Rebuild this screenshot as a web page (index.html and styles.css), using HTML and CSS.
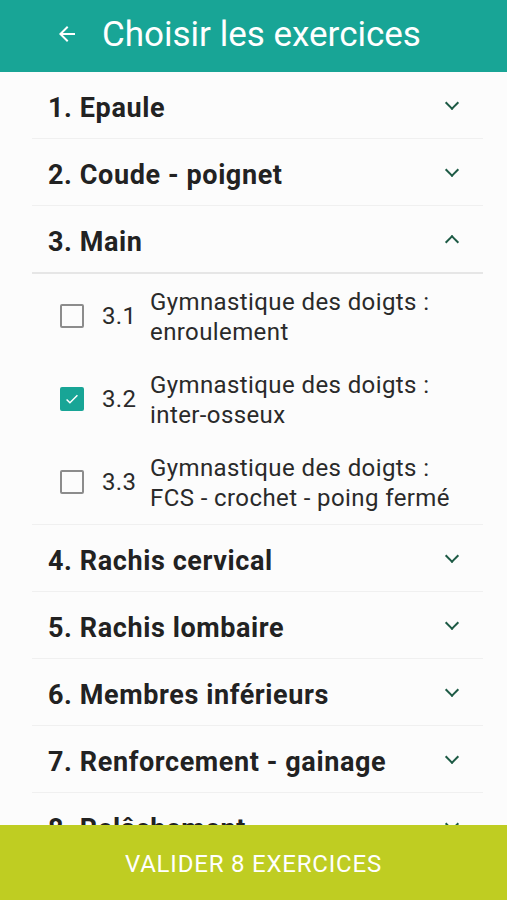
FILE: index.html
```html
<!DOCTYPE html>
<html lang="fr">
<head>
    <meta charset="UTF-8">
    <meta name="viewport" content="width=device-width, initial-scale=1.0">
    <title>Choisir les exercices</title>
    <link rel="stylesheet" href="styles.css">
</head>
<body>
    <div class="toolbar">
        <svg class="back" viewBox="0 0 24 24" width="24" height="24">
            <path d="M20 11H7.83l5.59-5.59L12 4l-8 8 8 8 1.41-1.41L7.83 13H20v-2z" fill="#fff"/>
        </svg>
        <h1>Choisir les exercices</h1>
    </div>

    <div class="list">
        <div class="section">
            <div class="section-head"><span>1. Epaule</span><span class="chevron down"></span></div>
        </div>
        <div class="section">
            <div class="section-head"><span>2. Coude - poignet</span><span class="chevron down"></span></div>
        </div>
        <div class="section open">
            <div class="section-head"><span>3. Main</span><span class="chevron up"></span></div>
            <div class="items">
                <div class="item">
                    <span class="box"></span>
                    <span class="num">3.1</span>
                    <span class="label">Gymnastique des doigts :<br>enroulement</span>
                </div>
                <div class="item">
                    <span class="box checked">
                        <svg viewBox="0 0 24 24" width="20" height="20"><path d="M5.5 12.5l4 4L18.5 7.5" fill="none" stroke="#fff" stroke-width="1.8"/></svg>
                    </span>
                    <span class="num">3.2</span>
                    <span class="label">Gymnastique des doigts :<br>inter-osseux</span>
                </div>
                <div class="item">
                    <span class="box"></span>
                    <span class="num">3.3</span>
                    <span class="label">Gymnastique des doigts :<br>FCS - crochet - poing fermé</span>
                </div>
            </div>
        </div>
        <div class="section">
            <div class="section-head"><span>4. Rachis cervical</span><span class="chevron down"></span></div>
        </div>
        <div class="section">
            <div class="section-head"><span>5. Rachis lombaire</span><span class="chevron down"></span></div>
        </div>
        <div class="section">
            <div class="section-head"><span>6. Membres inférieurs</span><span class="chevron down"></span></div>
        </div>
        <div class="section">
            <div class="section-head"><span>7. Renforcement - gainage</span><span class="chevron down"></span></div>
        </div>
        <div class="section">
            <div class="section-head"><span>8. Relâchement</span><span class="chevron down"></span></div>
        </div>
    </div>

    <div class="validate">Valider 8 exercices</div>
</body>
</html>
```

FILE: styles.css
```css
:root {
    --teal: #18a596;
    --lime: #bfcd22;
    --chevron: #1d5a45;
    --text: #222;
    --divider: #f0f0f0;
}

* {
    box-sizing: border-box;
    margin: 0;
    padding: 0;
}

body {
    font-family: Roboto, "Noto Sans", sans-serif;
    background: #fcfcfc;
    color: var(--text);
    height: 900px;
    overflow: hidden;
}

.toolbar {
    height: 72px;
    background: var(--teal);
    display: flex;
    align-items: center;
    padding-left: 55px;
    color: #fff;
}

.toolbar .back {
    margin-right: 23px;
    margin-top: -4px;
}

.toolbar h1 {
    font-weight: 400;
    font-size: 35px;
    margin-top: -3px;
}

.list {
    margin: 0 24px 0 32px;
}

.section-head {
    height: 67px;
    display: flex;
    align-items: center;
    justify-content: space-between;
    padding: 6px 24px 0 16px;
    font-size: 27px;
    font-weight: 700;
    letter-spacing: 0.6px;
    border-bottom: 1px solid var(--divider);
}

.section.open .section-head {
    border-bottom: 2px solid #e6e6e6;
    height: 68px;
}

.chevron {
    width: 10px;
    height: 10px;
    border-right: 2.5px solid var(--chevron);
    border-bottom: 2.5px solid var(--chevron);
    margin-right: 2px;
}

.chevron.down {
    transform: rotate(45deg);
    margin-top: -10px;
}

.chevron.up {
    transform: rotate(-135deg);
    margin-top: 0;
}

.items {
    border-bottom: 1px solid var(--divider);
    padding-bottom: 1px;
}

.item {
    height: 83px;
    display: flex;
    align-items: center;
    padding-left: 28px;
}

.box {
    width: 24px;
    height: 24px;
    border: 2px solid #8c8c8c;
    border-radius: 2px;
    display: flex;
    align-items: center;
    justify-content: center;
    flex-shrink: 0;
}

.box.checked {
    background: var(--teal);
    border-color: var(--teal);
}

.num {
    font-size: 24px;
    letter-spacing: 0.3px;
    margin-left: 18px;
    width: 48px;
    color: #2a2a2a;
}

.label {
    font-size: 24px;
    letter-spacing: 0.4px;
    line-height: 30px;
    color: #2a2a2a;
    margin-top: 2px;
}

.validate {
    position: fixed;
    left: 0;
    right: 0;
    bottom: 0;
    height: 75px;
    background: var(--lime);
    color: #fff;
    display: flex;
    align-items: center;
    justify-content: center;
    text-transform: uppercase;
    font-size: 24px;
    letter-spacing: 0.8px;
    padding-top: 2px;
}
```
